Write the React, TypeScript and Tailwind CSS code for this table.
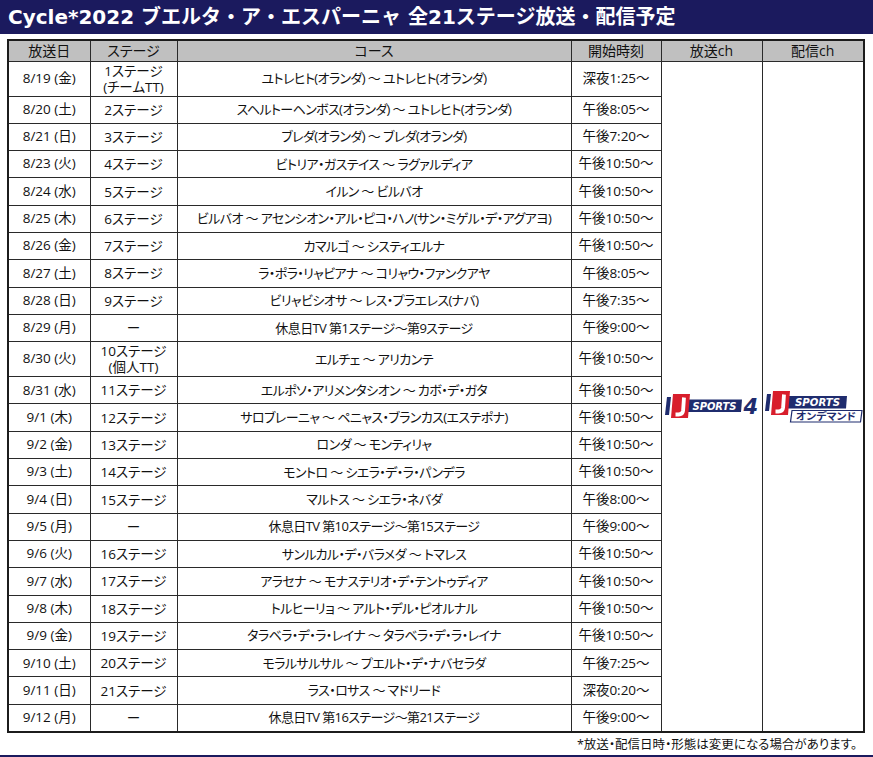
import React from 'react';

type Row = {
  date: string;
  stage: string[];
  course: string;
  time: string;
  tall?: boolean;
};

const rows: Row[] = [
  { date: '8/19 (金)', stage: ['1ステージ', '(チームTT)'], course: 'ユトレヒト(オランダ) ～ ユトレヒト(オランダ)', time: '深夜1:25～', tall: true },
  { date: '8/20 (土)', stage: ['2ステージ'], course: 'スヘルトーヘンボス(オランダ) ～ ユトレヒト(オランダ)', time: '午後8:05～' },
  { date: '8/21 (日)', stage: ['3ステージ'], course: 'ブレダ(オランダ) ～ ブレダ(オランダ)', time: '午後7:20～' },
  { date: '8/23 (火)', stage: ['4ステージ'], course: 'ビトリア・ガステイス ～ ラグァルディア', time: '午後10:50～' },
  { date: '8/24 (水)', stage: ['5ステージ'], course: 'イルン ～ ビルバオ', time: '午後10:50～' },
  { date: '8/25 (木)', stage: ['6ステージ'], course: 'ビルバオ ～ アセンシオン・アル・ピコ・ハノ(サン・ミゲル・デ・アグアヨ)', time: '午後10:50～' },
  { date: '8/26 (金)', stage: ['7ステージ'], course: 'カマルゴ ～ システィエルナ', time: '午後10:50～' },
  { date: '8/27 (土)', stage: ['8ステージ'], course: 'ラ・ポラ・リャビアナ ～ コリャウ・ファンクアヤ', time: '午後8:05～' },
  { date: '8/28 (日)', stage: ['9ステージ'], course: 'ビリャビシオサ ～ レス・プラエレス(ナバ)', time: '午後7:35～' },
  { date: '8/29 (月)', stage: ['ー'], course: '休息日TV 第1ステージ～第9ステージ', time: '午後9:00～' },
  { date: '8/30 (火)', stage: ['10ステージ', '(個人TT)'], course: 'エルチェ ～ アリカンテ', time: '午後10:50～', tall: true },
  { date: '8/31 (水)', stage: ['11ステージ'], course: 'エルポソ・アリメンタシオン ～ カボ・デ・ガタ', time: '午後10:50～' },
  { date: '9/1 (木)', stage: ['12ステージ'], course: 'サロブレーニャ ～ ペニャス・ブランカス(エステポナ)', time: '午後10:50～' },
  { date: '9/2 (金)', stage: ['13ステージ'], course: 'ロンダ ～ モンティリャ', time: '午後10:50～' },
  { date: '9/3 (土)', stage: ['14ステージ'], course: 'モントロ ～ シエラ・デ・ラ・パンデラ', time: '午後10:50～' },
  { date: '9/4 (日)', stage: ['15ステージ'], course: 'マルトス ～ シエラ・ネバダ', time: '午後8:00～' },
  { date: '9/5 (月)', stage: ['ー'], course: '休息日TV 第10ステージ～第15ステージ', time: '午後9:00～' },
  { date: '9/6 (火)', stage: ['16ステージ'], course: 'サンルカル・デ・バラメダ ～ トマレス', time: '午後10:50～' },
  { date: '9/7 (水)', stage: ['17ステージ'], course: 'アラセナ ～ モナステリオ・デ・テントゥディア', time: '午後10:50～' },
  { date: '9/8 (木)', stage: ['18ステージ'], course: 'トルヒーリョ ～ アルト・デル・ピオルナル', time: '午後10:50～' },
  { date: '9/9 (金)', stage: ['19ステージ'], course: 'タラベラ・デ・ラ・レイナ ～ タラベラ・デ・ラ・レイナ', time: '午後10:50～' },
  { date: '9/10 (土)', stage: ['20ステージ'], course: 'モラルサルサル ～ プエルト・デ・ナバセラダ', time: '午後7:25～' },
  { date: '9/11 (日)', stage: ['21ステージ'], course: 'ラス・ロサス ～ マドリード', time: '深夜0:20～' },
  { date: '9/12 (月)', stage: ['ー'], course: '休息日TV 第16ステージ～第21ステージ', time: '午後9:00～' },
];

const NAVY = '#1f2c6e';

function JMark({ x, y }: { x: number; y: number }) {
  // red slanted square with a white J
  return (
    <g transform={`translate(${x} ${y})`}>
      <polygon points="2,24 4,0 21,0 19,24" fill="#d81e2c" />
      <path d="M15 3.5 L14.1 16.5 Q13.7 20.5 9.5 20.5 L6.5 20.5" stroke="#fff" strokeWidth="3.8" fill="none" />
    </g>
  );
}

function JSports4() {
  return (
    <svg width="95" height="26" viewBox="0 0 95 26">
      <polygon points="0,22 2,4 6,4 4,22" fill={NAVY} />
      <polygon points="19,6.5 77,6.5 76,19 18,19" fill={NAVY} />
      <JMark x={4} y={1} />
      <text
        x="27.5"
        y="16.8"
        fill="#fff"
        fontSize="9.6"
        fontWeight="800"
        fontStyle="italic"
        fontFamily="'DejaVu Sans', sans-serif"
        textLength="44"
        lengthAdjust="spacingAndGlyphs"
      >
        SPORTS
      </text>
      <text
        x="78.5"
        y="21"
        fill={NAVY}
        fontSize="21"
        fontWeight="700"
        fontStyle="italic"
        fontFamily="'DejaVu Sans', sans-serif"
      >
        4
      </text>
    </svg>
  );
}

function JSportsOnDemand() {
  return (
    <svg width="98" height="32" viewBox="0 0 98 32">
      <polygon points="0,20 2,3 6,3 4,20" fill={NAVY} />
      <polygon points="20,5 82,5 81,17.5 19,17.5" fill={NAVY} />
      <JMark x={4} y={0} />
      <text
        x="30"
        y="15.2"
        fill="#fff"
        fontSize="9.6"
        fontWeight="800"
        fontStyle="italic"
        fontFamily="'DejaVu Sans', sans-serif"
        textLength="45"
        lengthAdjust="spacingAndGlyphs"
      >
        SPORTS
      </text>
      <polygon points="27,19.5 97,19.5 95.5,31 25.5,31" fill="#fff" stroke={NAVY} strokeWidth="1.2" />
      <text
        x="31"
        y="29"
        fill={NAVY}
        fontSize="9.8"
        fontWeight="700"
        fontFamily="'Noto Sans CJK JP', sans-serif"
        textLength="60"
        lengthAdjust="spacingAndGlyphs"
      >
        オンデマンド
      </text>
    </svg>
  );
}

export default function App() {
  return (
    <div className="flex h-[757px] w-[873px] flex-col overflow-hidden bg-white font-['Open_Sans','Noto_Sans_CJK_JP',sans-serif] text-[#111] [font-feature-settings:'palt']">
      {/* Title bar */}
      <header className="flex h-[34px] shrink-0 items-center bg-[#1b1a5e] pl-[8px]">
        <h1 className="font-['DejaVu_Sans','Noto_Sans_CJK_JP',sans-serif] text-[20px] font-bold leading-none text-white [font-feature-settings:normal]">
          Cycle*2022 ブエルタ・ア・エスパーニャ 全21ステージ放送・配信予定
        </h1>
      </header>

      <div className="pl-[7px] pt-[5px]">
        <table className="w-[856px] table-fixed border-collapse border-2 border-[#1c1c1c] text-center">
          <colgroup>
            <col className="w-[82px]" />
            <col className="w-[87px]" />
            <col className="w-[394px]" />
            <col className="w-[90px]" />
            <col className="w-[101px]" />
            <col className="w-[102px]" />
          </colgroup>
          <thead>
            <tr className="h-[21px] bg-[#c0c0c0] text-[14px] leading-none">
              <th className="border border-[#2a2a2a] font-normal">放送日</th>
              <th className="border border-[#2a2a2a] font-normal">ステージ</th>
              <th className="border border-[#2a2a2a] font-normal">コース</th>
              <th className="border border-[#2a2a2a] font-normal">開始時刻</th>
              <th className="border border-[#2a2a2a] font-normal">放送ch</th>
              <th className="border border-[#2a2a2a] font-normal">配信ch</th>
            </tr>
          </thead>
          <tbody className="text-[13.5px] leading-none">
            {rows.map((r, i) => (
              <tr key={r.date} className={r.tall ? 'h-[35px]' : 'h-[27.3px]'}>
                <td className="border border-[#2a2a2a]">{r.date}</td>
                <td className="border border-[#2a2a2a] leading-[16px]">
                  {r.stage.map((s) => (
                    <div key={s}>{s}</div>
                  ))}
                </td>
                <td className="border border-[#2a2a2a] text-[13px] tracking-[-0.6px]">{r.course}</td>
                <td className="border border-[#2a2a2a]">{r.time}</td>
                {i === 0 && (
                  <>
                    <td rowSpan={rows.length} className="border border-[#2a2a2a] align-middle">
                      <div className="flex justify-center pl-[2px] pt-[20px]">
                        <JSports4 />
                      </div>
                    </td>
                    <td rowSpan={rows.length} className="border border-[#2a2a2a] align-middle">
                      <div className="flex justify-center pl-[2px] pt-[22px]">
                        <JSportsOnDemand />
                      </div>
                    </td>
                  </>
                )}
              </tr>
            ))}
          </tbody>
        </table>
      </div>

      <p className="mt-[6px] pr-[16px] text-right text-[12.5px] leading-none">
        *放送・配信日時・形態は変更になる場合があります。
      </p>

      <div className="mt-auto h-[2px] shrink-0 bg-[#1b1a5e]" />
    </div>
  );
}
